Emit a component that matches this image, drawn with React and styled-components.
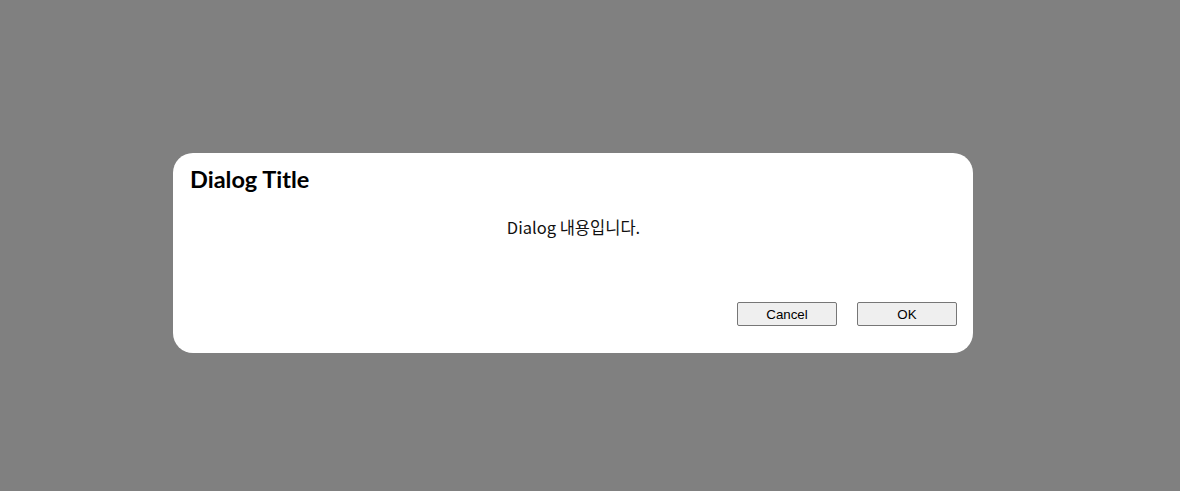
import styled, { createGlobalStyle } from "styled-components";

const Global = createGlobalStyle`
  html, body {
    margin: 0;
    height: 100%;
  }
  body {
    background: #808080;
    font-family: "Noto Sans", "Noto Sans CJK KR", sans-serif;
  }
  #root {
    height: 100%;
  }
`;

const Overlay = styled.div`
  height: 491px;
  box-sizing: border-box;
  padding: 153px 0 0 173px;
  display: flex;
  align-items: flex-start;
`;

const Dialog = styled.div`
  width: 800px;
  height: 200px;
  box-sizing: border-box;
  background: #fff;
  border-radius: 20px;
  padding: 11px 16px 27px 17px;
  display: flex;
  flex-direction: column;
`;

const Title = styled.h2`
  margin: 0;
  font-family: Lato, "Noto Sans", sans-serif;
  font-weight: 700;
  font-size: 23.5px;
  line-height: 30px;
  color: #000;
`;

const Body = styled.p`
  margin: 22px 0 0;
  text-align: center;
  font-family: "Noto Sans CJK KR", sans-serif;
  font-size: 16.5px;
  line-height: 22px;
  color: #111;
`;

const Footer = styled.div`
  margin-top: auto;
  display: flex;
  justify-content: flex-end;
  gap: 20px;
`;

const Button = styled.button`
  width: 100px;
  height: 24px;
  padding: 0;
  box-sizing: border-box;
  border: 1px solid #767676;
  border-radius: 2px;
  background: #efefef;
  font-family: "Liberation Sans", Arial, sans-serif;
  font-size: 13.333px;
  color: #000;
`;

export default function App() {
  return (
    <>
      <Global />
      <Overlay>
        <Dialog>
          <Title>Dialog Title</Title>
          <Body>Dialog 내용입니다.</Body>
          <Footer>
            <Button>Cancel</Button>
            <Button>OK</Button>
          </Footer>
        </Dialog>
      </Overlay>
    </>
  );
}
